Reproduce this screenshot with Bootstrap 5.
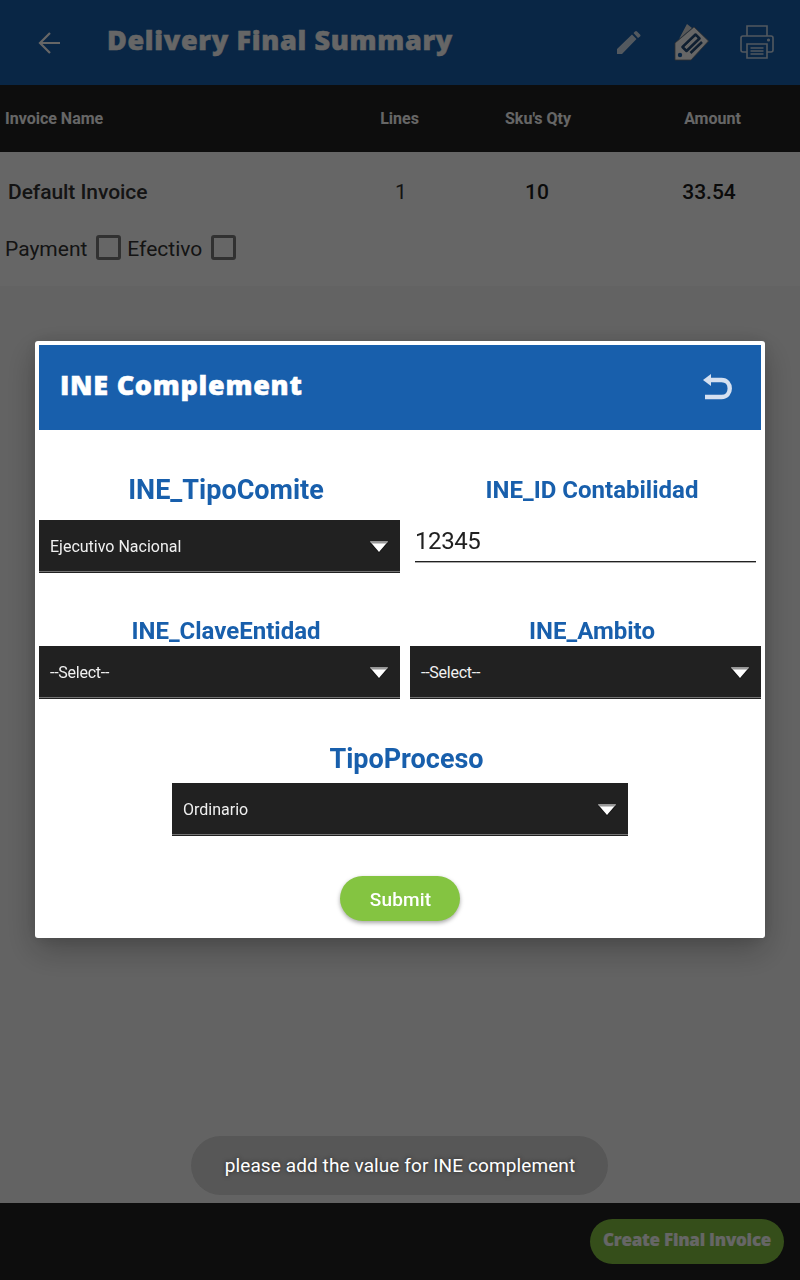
<!DOCTYPE html>
<html lang="en">
<head>
<meta charset="utf-8">
<meta name="viewport" content="width=device-width, initial-scale=1">
<title>Delivery Final Summary</title>
<link href="https://cdn.jsdelivr.net/npm/bootstrap@5.3.0/dist/css/bootstrap.min.css" rel="stylesheet">
<style>
  body { font-family: Roboto, "Liberation Sans", sans-serif; background: #f8f8f8; color: #333; overflow: hidden; }
  .brand-bg { background: #185fac; }
  .ink-bg { background: #212121; }
  .rounded-face { font-family: "Open Sans", Lato, sans-serif; font-weight: 800; -webkit-text-stroke: .5px currentColor; white-space: nowrap; }
  .app-bar { height: 85px; padding: 0 26px 0 37px; }
  .app-title { font-size: 27px; line-height: 40px; letter-spacing: .68px; margin: -5px 0 0 45px; }
  .grid-line { display: grid; grid-template-columns: 332px 125px 152px 1fr; align-items: center; text-align: center; }
  .grid-line > :first-child { text-align: left; }
  .head-line { height: 67px; font-size: 16px; font-weight: 700; padding-left: 5px; }
  .head-line > :last-child { padding-left: 11px; }
  .data-line { height: 80px; font-size: 21px; font-weight: 500; padding: 2px 0 0 5px; }
  .data-line > :first-child { padding-left: 3px; letter-spacing: -.06px; }
  .data-line > :nth-child(2) { padding-left: 3px; }
  .data-line > :nth-child(3) { padding-right: 2px; }
  .data-line > :last-child { padding-left: 4px; }
  .qty { color: #1c1c1c; }
  .pay-line { height: 54px; font-size: 21px; padding: 0 5px 20px; }
  .pay-line > span:not(.tick-box) { padding-top: 1px; }
  .tick-box { width: 25px; height: 25px; border: 3px solid #7a7a7a; border-radius: 3px; background: transparent; margin-top: -3px; }
  .bottom-bar { height: 77px; padding-right: 16px; }
  .pill { background: #84c441; border-radius: 23px; height: 45px; color: #fff; border: 0; padding: 0; }
  .pill-invoice { width: 194px; font-size: 17px; line-height: 41px; -webkit-text-stroke-width: .15px; padding-bottom: 4px; letter-spacing: -.25px; }
  .pill-submit { width: 120px; font-size: 19px; font-weight: 500; box-shadow: 0 2px 4px rgba(0,0,0,.35); padding: 3px 0 0 1px; letter-spacing: .15px; }
  .scrim { background: rgba(0,0,0,.6); padding: 341px 35px 0; }
  .dialog-panel { height: 597px; padding: 4px; border-radius: 3px; background: #fff; box-shadow: 0 12px 32px rgba(0,0,0,.28), 0 0 16px rgba(0,0,0,.1); }
  .dialog-head { height: 85px; padding: 0 28px 0 21px; }
  .dialog-title { font-size: 27px; line-height: 40px; letter-spacing: .72px; margin: -6px 0 0; }
  .duo { display: grid; grid-template-columns: 361px 351px; column-gap: 10px; }
  .field-label { color: #185fac; font-weight: 700; font-size: 24px; line-height: 30px; text-align: center; padding-left: 13px; white-space: nowrap; }
  .field-label.big { font-size: 27px; }
  .spinner-box { height: 53px; background: #212121; color: #f0f0f0; font-size: 16px; padding: 2px 11px 0; border-bottom: 1px solid #212121; box-shadow: inset 0 -1px #747474; }
  .unset { letter-spacing: -.25px; }
  .id-field { border: 0; border-bottom: 1px solid #212121; box-shadow: 0 1px #aaa; margin: 0 5px; height: 42px; padding: 0; font-size: 24px; letter-spacing: -.4px; color: #212121; background: transparent; border-radius: 0; width: 341px; line-height: 40px; outline: 0; }
  .row-a { padding-top: 45px; }
  .row-b { padding-top: 43px; }
  .toast-note { left: 191px; top: 1136px; width: 417px; height: 59px; border-radius: 30px; background: #575757; color: #fff; font-size: 19px; padding: 2px 0 0 1px; letter-spacing: .1px; text-shadow: 0 0 4px rgba(0,0,0,.6); z-index: 1060; }
</style>
</head>
<body>
<div class="d-flex flex-column vh-100">
  <header class="app-bar brand-bg text-white d-flex align-items-center">
    <svg width="25" height="24" viewBox="0 0 25 24" fill="none" stroke="#fff" stroke-width="2.200"><path d="M23 12H3M13 2 3 12l10 10"/></svg>
    <h1 class="app-title rounded-face">Delivery Final Summary</h1>
    <div class="d-flex align-items-center ms-auto">
      <svg width="26" height="26" viewBox="0 0 26 26" fill="#fff" opacity=".8" style="margin-right:32px"><path d="M1 19 16 4.500 20.500 9 6 24H1zM17.500 3l1.500-1.500q1-1 2 0L24 4.500q1 1 0 2L22 8z"/></svg>
      <svg width="36" height="40" viewBox="0 0 36 40" style="margin-right:30px"><path d="M5 16 13 1l5 4z" fill="#ddd"/><path d="M1 20 20 4 34.500 18 17 37H1z" fill="#fff" stroke="#777" stroke-width=".8"/><circle cx="6" cy="32" r="2.200" fill="#185fac"/><path d="m8.500 24 13-12.500 4 4-13 12.500zM16.500 30 28 19" fill="none" stroke="#274f7a" stroke-width="2.600" stroke-linejoin="round"/><path d="m11.500 24.500 11-10" stroke="#fff" stroke-width="2"/></svg>
      <svg width="34" height="34" viewBox="0 0 34 34" fill="none" stroke="#fff" stroke-width="1.600" opacity=".78" style="margin-top:-2px"><path d="M7 11V1h20v10M7 27H3q-2 0-2-2V13q0-2 2-2h28q2 0 2 2v12q0 2-2 2h-4M7 19h20v14H7zM10.500 23h13M10.500 26h13M10.500 29h13"/><circle cx="28.500" cy="15" r=".8"/></svg>
    </div>
  </header>
  <div class="grid-line head-line ink-bg text-white"><span>Invoice Name</span><span>Lines</span><span>Sku's Qty</span><span>Amount</span></div>
  <div class="bg-white">
    <div class="grid-line data-line"><span>Default Invoice</span><span class="fw-normal">1</span><span class="qty">10</span><span class="qty">33.54</span></div>
    <div class="pay-line d-flex align-items-center"><span>Payment</span><span class="tick-box" style="margin-left:9px;margin-right:6px"></span><span>Efectivo</span><span class="tick-box" style="margin-left:9px"></span></div>
  </div>
  <footer class="bottom-bar ink-bg mt-auto d-flex align-items-center justify-content-end"><button class="pill pill-invoice rounded-face">Create Final Invoice</button></footer>
</div>

<div class="modal d-block scrim" tabindex="-1">
  <div class="dialog-panel">
    <div class="dialog-head brand-bg text-white d-flex align-items-center justify-content-between">
      <h2 class="dialog-title rounded-face">INE Complement</h2>
      <svg width="31" height="28" viewBox="0 0 31 28" style="margin-top:-2px"><path d="M7 7h12.500c11 0 11 17 0 17H3" fill="none" stroke="#d5e0f0" stroke-width="4.400"/><path d="M1 7 9 1v12z" fill="#d5e0f0"/></svg>
    </div>
    <div class="duo row-a">
      <div class="field-label big">INE_TipoComite</div>
      <div class="field-label">INE_ID Contabilidad</div>
      <div class="spinner-box d-flex align-items-center justify-content-between" style="margin-top:15px"><span>Ejecutivo Nacional</span><svg width="20" height="14" viewBox="0 0 20 14"><path d="M1 3h18l-9 10z" fill="#111"/><path d="M1 1.500h18L10 12z" fill="#fff"/><path d="M1 1.500h18l-2 2H3z" fill="#999"/></svg></div>
      <input class="id-field" style="margin-top:15px" value="12345" aria-label="INE_ID Contabilidad">
    </div>
    <div class="duo row-b">
      <div class="field-label">INE_ClaveEntidad</div>
      <div class="field-label">INE_Ambito</div>
      <div class="spinner-box d-flex align-items-center justify-content-between"><span class="unset">--Select--</span><svg width="20" height="14" viewBox="0 0 20 14"><path d="M1 3h18l-9 10z" fill="#111"/><path d="M1 1.500h18L10 12z" fill="#fff"/><path d="M1 1.500h18l-2 2H3z" fill="#999"/></svg></div>
      <div class="spinner-box d-flex align-items-center justify-content-between"><span class="unset">--Select--</span><svg width="20" height="14" viewBox="0 0 20 14"><path d="M1 3h18l-9 10z" fill="#111"/><path d="M1 1.500h18L10 12z" fill="#fff"/><path d="M1 1.500h18l-2 2H3z" fill="#999"/></svg></div>
    </div>
    <div class="mx-auto" style="width:456px;padding-top:45px">
      <div class="field-label big">TipoProceso</div>
      <div class="spinner-box d-flex align-items-center justify-content-between" style="margin-top:9px"><span>Ordinario</span><svg width="20" height="14" viewBox="0 0 20 14"><path d="M1 3h18l-9 10z" fill="#111"/><path d="M1 1.500h18L10 12z" fill="#fff"/><path d="M1 1.500h18l-2 2H3z" fill="#999"/></svg></div>
    </div>
    <div class="d-flex justify-content-center" style="padding-top:40px"><button class="pill pill-submit">Submit</button></div>
  </div>
</div>
<div class="toast-note position-fixed d-flex align-items-center justify-content-center" role="status">please add the value for INE complement</div>
<script src="https://cdn.jsdelivr.net/npm/bootstrap@5.3.0/dist/js/bootstrap.bundle.min.js"></script>
</body>
</html>
